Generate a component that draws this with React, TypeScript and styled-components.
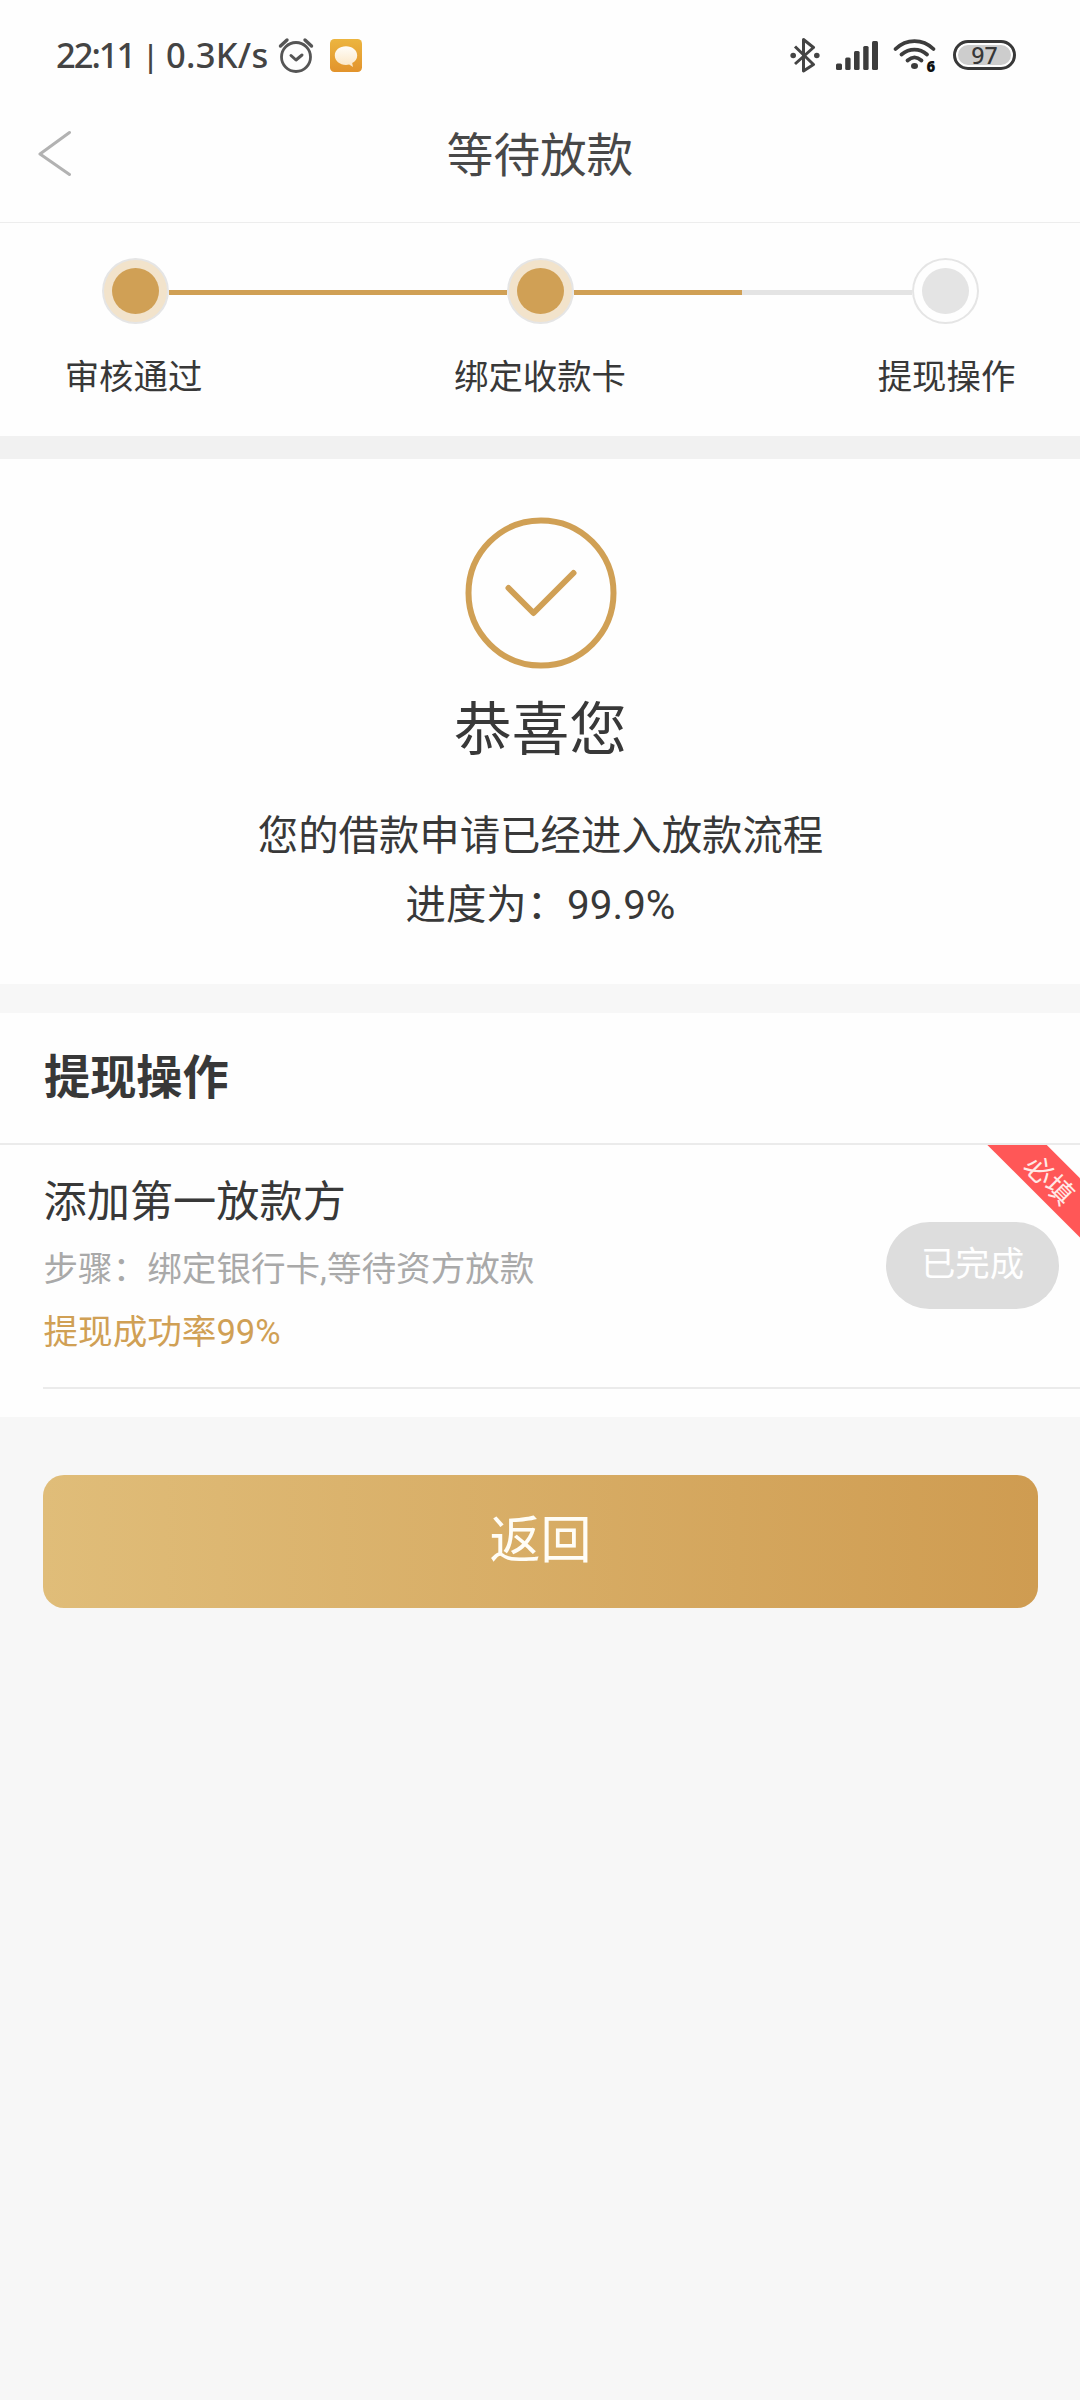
import React from 'react';
import styled, { createGlobalStyle } from 'styled-components';

const gold = '#d0a055';
const ink = '#383838';

const GlobalStyle = createGlobalStyle`
  * { box-sizing: border-box; }
  body {
    margin: 0;
    background: #f7f7f7;
    color: ${ink};
    font-family: Roboto, 'Noto Sans CJK SC', sans-serif;
  }
`;

const Screen = styled.div`
  width: 1080px;
  height: 2400px;
  display: flex;
  flex-direction: column;
  background: #f7f7f7;
  overflow: hidden;
`;

const StatusBar = styled.div`
  height: 86px;
  padding: 24px 64px 0 56px;
  display: flex;
  justify-content: space-between;
  background: #fefefe;
`;

const StatusGroup = styled.div`
  display: flex;
  align-items: center;
  height: 62px;
`;

const Clock = styled.div`
  width: 222px;
  display: flex;
  white-space: pre;
  font: 500 34.5px/62px 'Noto Sans', sans-serif;
  color: #444;
`;

const ClockPart = styled.span<{ $width: number; $spacing?: number }>`
  flex: none;
  width: ${p => p.$width}px;
  letter-spacing: ${p => p.$spacing ?? 0}px;
`;

const ClockBar = styled(ClockPart)`
  text-align: center;
  font-size: 31px;
`;

const Battery = styled.span`
  width: 63px;
  height: 30px;
  margin-left: 16px;
  border: 3px solid #383838;
  border-radius: 15px;
  background: #cdcdcd;
  box-shadow: inset 0 0 0 2px #fefefe;
  text-align: center;
  font: 500 23px/24px 'Noto Sans', sans-serif;
`;

const Header = styled.header`
  height: 137px;
  display: grid;
  grid-template-columns: 110px 1fr 110px;
  border-bottom: 1px solid #ededed;
  background: #fefefe;
`;

const BackButton = styled.button`
  align-self: start;
  padding: 42px 0 0 36px;
  border: 0;
  background: none;
  text-align: left;
  line-height: 0;
`;

const Title = styled.h1`
  margin: 0;
  padding-top: 26px;
  text-align: center;
  font-size: 46.6px;
  font-weight: 400;
  line-height: 88px;
  color: #484848;
`;

const Steps = styled.section`
  height: 213px;
  padding-top: 35px;
  background: #fefefe;
`;

const Track = styled.div`
  display: flex;
  align-items: center;
  padding: 0 101.5px 0 102px;
  height: 66px;
`;

const Dot = styled.span<{ $done?: boolean }>`
  flex: none;
  width: 67px;
  height: 66px;
  display: grid;
  place-items: center;
  border: 2px solid #e5e5e5;
  border-radius: 50%;
  background: ${p => (p.$done ? '#f2e3cb' : '#fefefe')};
  &::after {
    content: '';
    width: 47px;
    height: 46px;
    border-radius: 50%;
    background: ${p => (p.$done ? gold : '#e4e4e4')};
  }
`;

const Line = styled.span<{ $fill: number }>`
  flex: 1;
  height: 5px;
  margin-top: 3px;
  background: linear-gradient(to right, ${gold} ${p => p.$fill}%, #e4e4e4 ${p => p.$fill}%);
`;

const StepLabels = styled.div`
  display: flex;
  justify-content: space-between;
  margin: 0 -1.5px;
  padding-top: 28px;
`;

const StepLabel = styled.span`
  width: 270px;
  text-align: center;
  font-size: 34.4px;
  line-height: 50px;
`;

const Divider = styled.div<{ $size: number; $tone: string }>`
  flex: none;
  height: ${p => p.$size}px;
  background: ${p => p.$tone};
`;

const Result = styled.section`
  height: 525px;
  padding: 58px 0 0 1px;
  display: flex;
  flex-direction: column;
  align-items: center;
  background: #fefefe;
`;

const Congrats = styled.h2`
  margin: 20px 0 0;
  font-size: 57.6px;
  font-weight: 400;
  line-height: 84px;
`;

const Message = styled.p`
  margin: 29px 0 0;
  text-align: center;
  font-size: 40.4px;
  line-height: 69.4px;
`;

const Panel = styled.section`
  height: 404px;
  background: #fefefe;
`;

const PanelTitle = styled.h3`
  margin: 0;
  height: 132px;
  padding: 30px 0 0 44px;
  border-bottom: 2px solid #ebebeb;
  font-size: 46.2px;
  font-weight: 700;
  line-height: 70px;
`;

const Lender = styled.div`
  position: relative;
  height: 244px;
  margin-left: 43px;
  padding: 28px 21px 0 0;
  display: flex;
  justify-content: space-between;
  border-bottom: 2px solid #ebebeb;
  overflow: hidden;
`;

const LenderInfo = styled.div`
  display: flex;
  flex-direction: column;
  padding-left: 0.5px;
`;

const LenderName = styled.div`
  font-size: 43.2px;
  line-height: 60px;
`;

const LenderSteps = styled.div`
  margin-top: 11px;
  font-size: 34.6px;
  line-height: 50px;
  color: #a9a9a9;
`;

const LenderRate = styled.div`
  margin-top: 13px;
  font-size: 34.6px;
  line-height: 50px;
  color: ${gold};
`;

const DonePill = styled.span`
  width: 173px;
  height: 87px;
  margin-top: 49px;
  border-radius: 44px;
  background: #ddd;
  color: #fff;
  text-align: center;
  font-size: 34.4px;
  line-height: 84px;
`;

const Ribbon = styled.span`
  position: absolute;
  top: 10.5px;
  right: -69px;
  width: 200px;
  height: 42.4px;
  padding-left: 5px;
  transform: rotate(45deg);
  background: #ff5757;
  color: #ffe9e6;
  text-align: center;
  font-size: 28px;
  line-height: 47px;
`;

const ReturnButton = styled.button`
  height: 133px;
  margin: 58px 42px 0 43px;
  padding: 0 0 2px;
  border: 0;
  border-radius: 21px;
  background: linear-gradient(to right, #e0bd79, #cf9c51);
  color: #fffdf6;
  font: 400 51px/128px Roboto, 'Noto Sans CJK SC', sans-serif;
`;

const AlarmIcon = () => (
  <svg width="36" height="36" viewBox="0 0 36 36" fill="none" stroke="#555" strokeWidth="3" strokeLinecap="round" strokeLinejoin="round">
    <circle cx="18" cy="20" r="14.5" strokeWidth="2.8" />
    <path d="M13 18.5l5 4.5 6-5" />
    <path d="M2.5 9L9 3M33.5 9L27 3" strokeWidth="3.4" />
  </svg>
);

const ChatIcon = () => (
  <svg width="32" height="33" viewBox="0 0 32 33" style={{ marginLeft: 16 }}>
    <defs>
      <linearGradient id="tile" x2="0" y2="1">
        <stop stopColor="#ecb53f" />
        <stop offset="1" stopColor="#e2932c" />
      </linearGradient>
      <linearGradient id="bubble" x2="0" y2="1">
        <stop stopColor="#fffdf8" />
        <stop offset="1" stopColor="#fbe6c4" />
      </linearGradient>
    </defs>
    <rect width="32" height="33" rx="4.5" fill="url(#tile)" />
    <path d="M16 7.2c6.4 0 11.2 4 11.2 9.3 0 3.4-2 6-5 7.6l.8 3.9-3.8-2.4c-1 .2-2 .3-3.2.3-6.4 0-11.2-4-11.2-9.4S9.6 7.200 16 7.200z" fill="url(#bubble)" />
  </svg>
);

const BluetoothIcon = () => (
  <svg width="30" height="36" viewBox="0 0 30 36" fill="none" stroke="#444" strokeWidth="3" strokeLinejoin="round">
    <path d="M5 9.500L23.500 27.500 13.500 34V2.500L23.500 10.500 5 27" />
    <circle cx="3.200" cy="18.500" r="2.800" fill="#444" stroke="none" />
    <circle cx="26.800" cy="18.500" r="2.800" fill="#444" stroke="none" />
  </svg>
);

const SignalIcon = () => (
  <svg width="42" height="30" viewBox="0 0 42 30" fill="#3c3c3c" style={{ marginLeft: 16 }}>
    <rect x="0" y="23.500" width="6" height="6.500" rx="1.500" />
    <rect x="9.200" y="17.500" width="5.400" height="12.500" rx="1.500" />
    <rect x="18" y="11" width="5.600" height="19" rx="1.500" />
    <rect x="27.200" y="6" width="5.400" height="24" rx="1.500" />
    <rect x="36" y="1" width="6" height="29" rx="1.500" />
  </svg>
);

const Wifi6Icon = () => (
  <svg width="44" height="36" viewBox="0 0 44 36" overflow="visible" fill="none" stroke="#3c3c3c" strokeWidth="3.800" strokeLinecap="round" style={{ marginLeft: 15 }}>
    <path d="M2.500 12C13.500 1.500 29.500 1.500 40.500 12" />
    <path d="M8.500 17.500C16.500 11 26.500 11 34 17.500" />
    <path d="M14.500 23.500C19 19.500 24 19.500 28.500 23.500" />
    <ellipse cx="21.500" cy="29" rx="3.500" ry="3" fill="#3c3c3c" stroke="none" />
    <text x="33.500" y="34.500" fontFamily="Noto Sans" fontWeight="900" fontSize="15" fill="#111" stroke="none">6</text>
  </svg>
);

const BackIcon = () => (
  <svg width="36" height="48" viewBox="0 0 36 48" fill="none" stroke="#b2b2b2" strokeWidth="3" strokeLinecap="round" strokeLinejoin="round">
    <path d="M33.500 4.500L4 26l29.500 20.500" />
  </svg>
);

const CheckIcon = () => (
  <svg width="152" height="152" viewBox="0 0 152 152" fill="none" stroke={gold} strokeWidth="6" strokeLinecap="round" strokeLinejoin="round" style={{ flex: 'none' }}>
    <circle cx="76" cy="76" r="72.500" />
    <path d="M43.500 71L68.500 96 108.500 56" />
  </svg>
);

export default function App() {
  return (
    <>
      <GlobalStyle />
      <Screen>
        <StatusBar>
          <StatusGroup>
            <Clock>
              <ClockPart $width={79} $spacing={-2}>22:11</ClockPart>
              <ClockBar $width={31}>|</ClockBar>
              <ClockPart $width={104} $spacing={0.3}>0.3K/s</ClockPart>
            </Clock>
            <AlarmIcon />
            <ChatIcon />
          </StatusGroup>
          <StatusGroup>
            <BluetoothIcon />
            <SignalIcon />
            <Wifi6Icon />
            <Battery>97</Battery>
          </StatusGroup>
        </StatusBar>
        <Header>
          <BackButton aria-label="返回">
            <BackIcon />
          </BackButton>
          <Title>等待放款</Title>
        </Header>
        <Steps>
          <Track>
            <Dot $done />
            <Line $fill={100} />
            <Dot $done />
            <Line $fill={49.7} />
            <Dot />
          </Track>
          <StepLabels>
            <StepLabel>审核通过</StepLabel>
            <StepLabel>绑定收款卡</StepLabel>
            <StepLabel>提现操作</StepLabel>
          </StepLabels>
        </Steps>
        <Divider $size={23} $tone="#f1f1f1" />
        <Result>
          <CheckIcon />
          <Congrats>恭喜您</Congrats>
          <Message>
            您的借款申请已经进入放款流程
            <br />
            进度为：99.9%
          </Message>
        </Result>
        <Divider $size={29} $tone="#f7f7f7" />
        <Panel>
          <PanelTitle>提现操作</PanelTitle>
          <Lender>
            <LenderInfo>
              <LenderName>添加第一放款方</LenderName>
              <LenderSteps>步骤：绑定银行卡,等待资方放款</LenderSteps>
              <LenderRate>提现成功率99%</LenderRate>
            </LenderInfo>
            <DonePill>已完成</DonePill>
            <Ribbon>必填</Ribbon>
          </Lender>
        </Panel>
        <ReturnButton>返回</ReturnButton>
      </Screen>
    </>
  );
}
